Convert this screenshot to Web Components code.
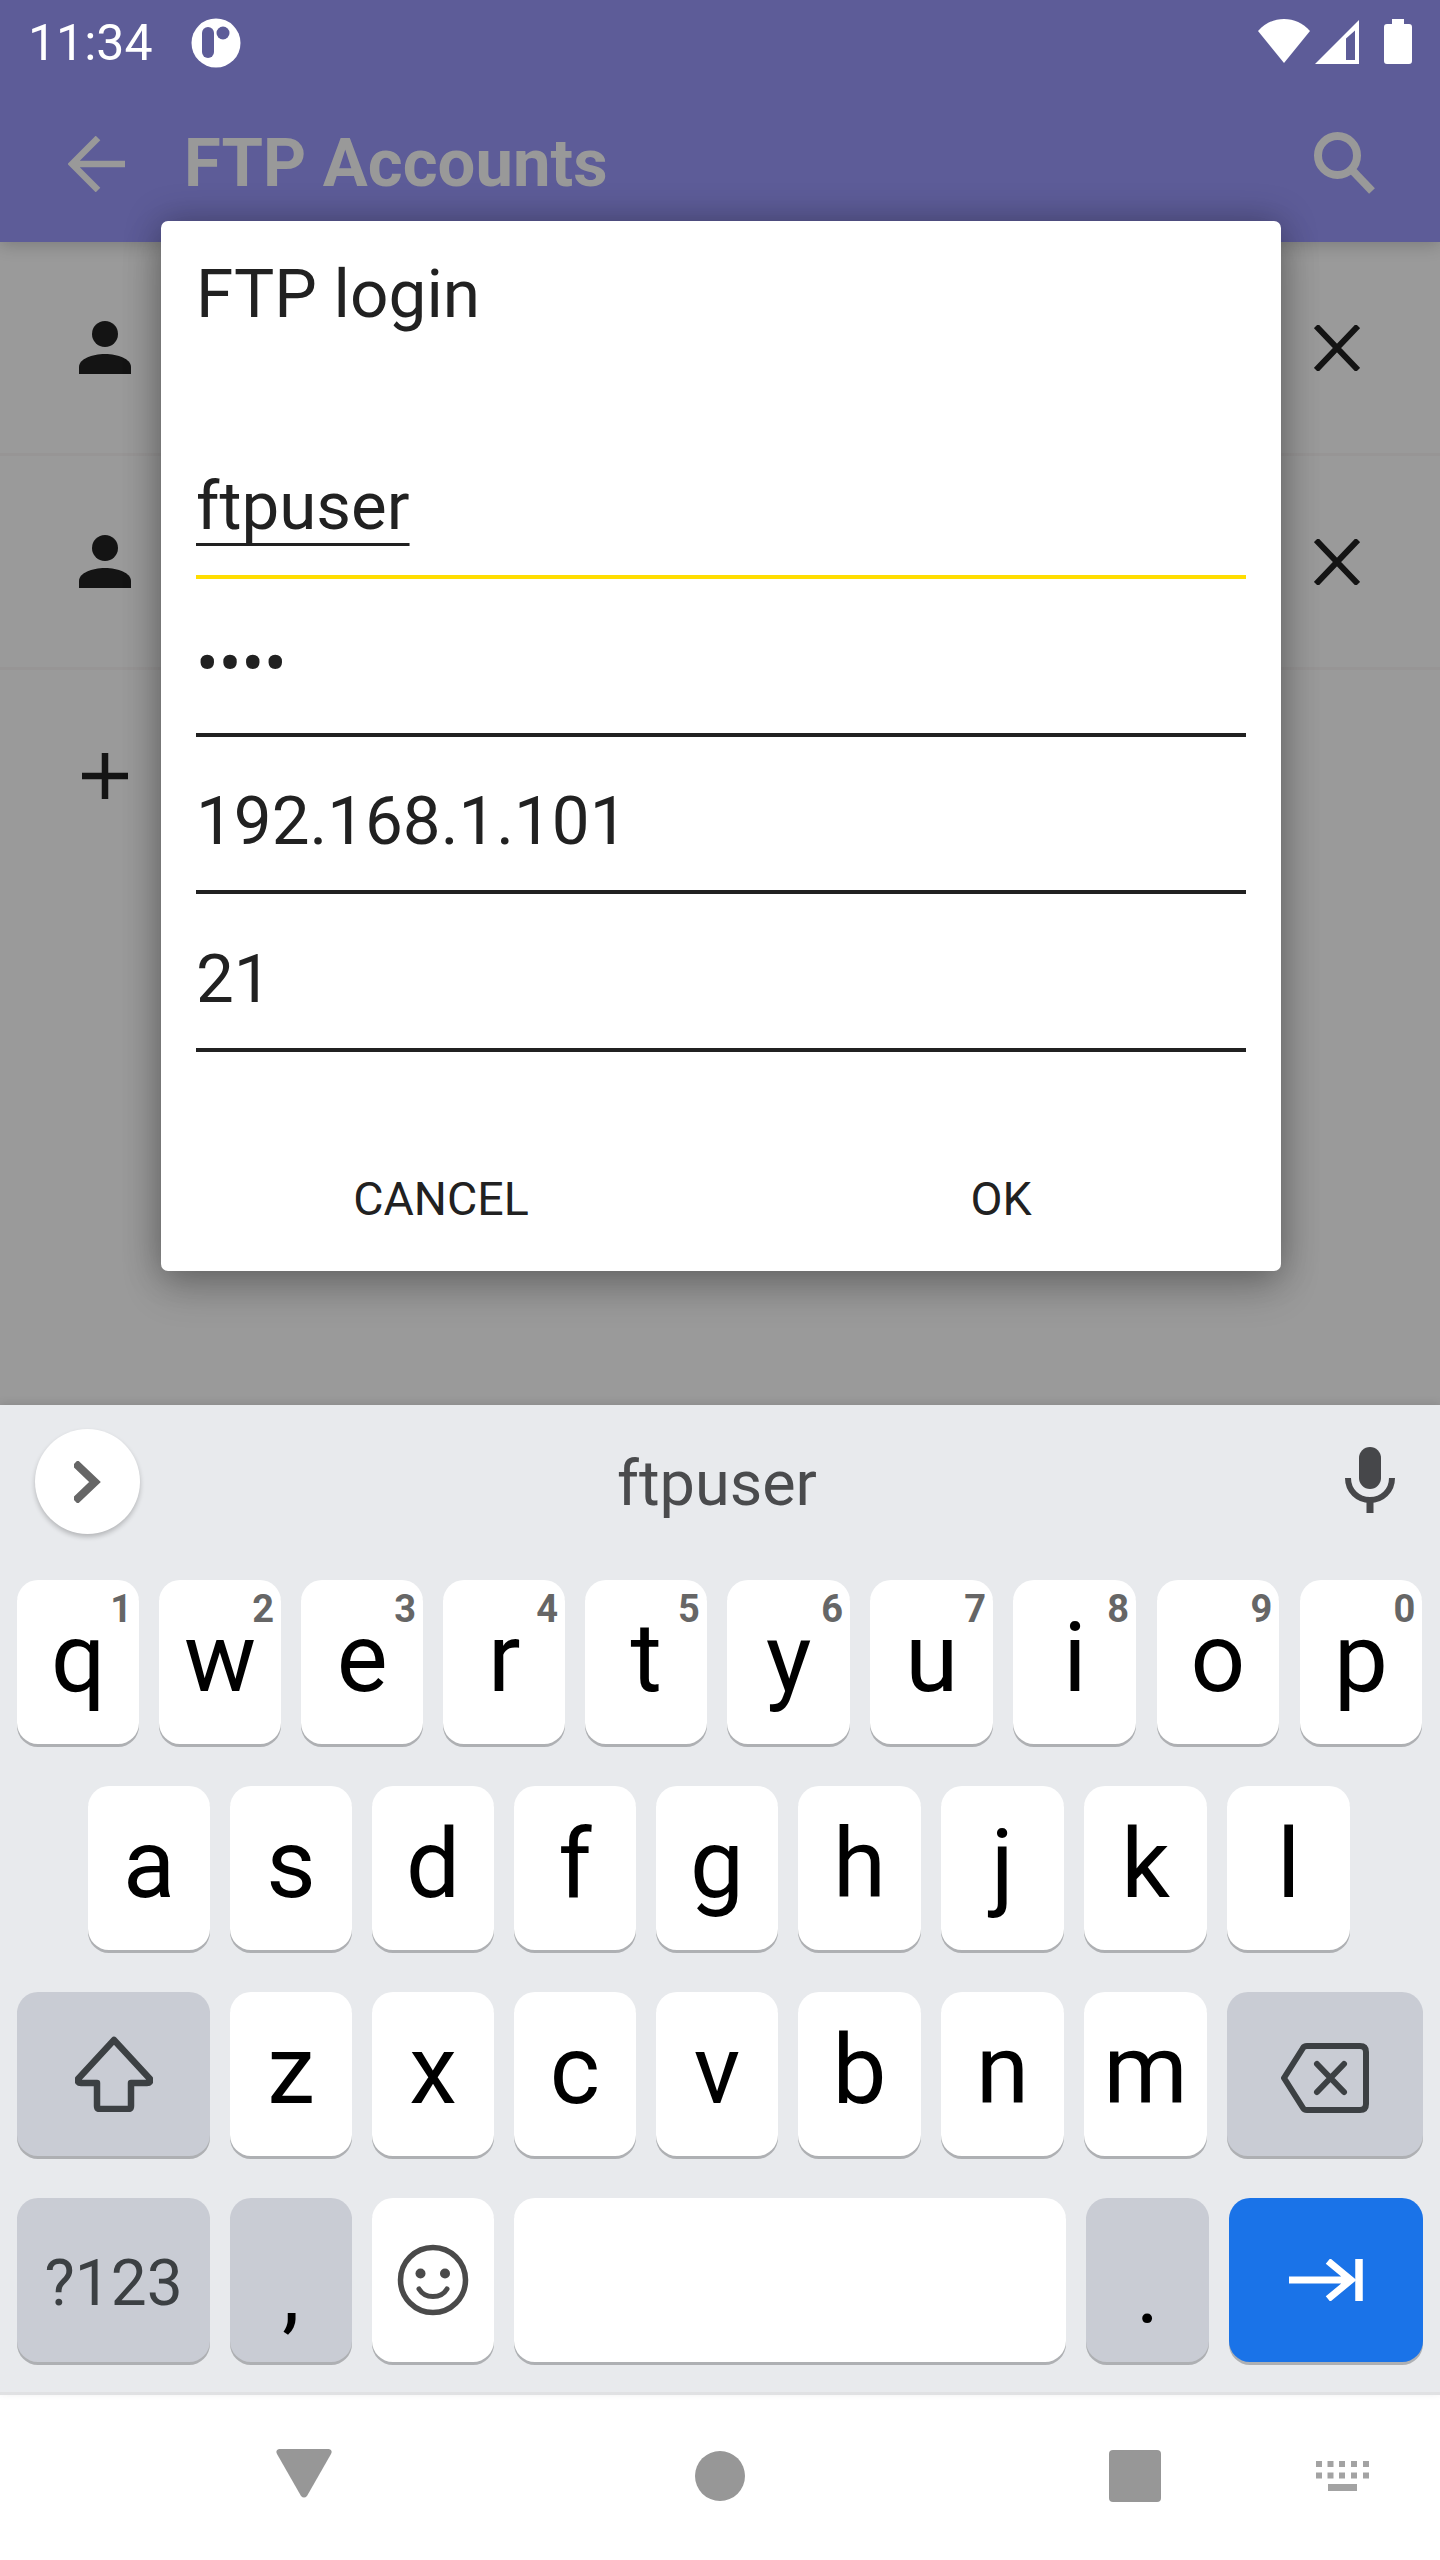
<!DOCTYPE html>
<html>
<head>
<meta charset="utf-8">
<title>FTP Accounts</title>
<style>
    html, body { margin: 0; padding: 0; }
    body { font-family: Roboto, "Liberation Sans", sans-serif; }
</style>
</head>
<body>
<ftp-app>
    <status-bar slot="top" time="11:34"></status-bar>
    <app-bar slot="top" heading="FTP Accounts"></app-bar>
    <account-row icon="person" removable></account-row>
    <account-row icon="person" removable></account-row>
    <account-row icon="add" plain></account-row>
    <login-dialog slot="modal" heading="FTP login">
        <dialog-field focused composing>ftpuser</dialog-field>
        <dialog-field>••••</dialog-field>
        <dialog-field>192.168.1.101</dialog-field>
        <dialog-field>21</dialog-field>
    </login-dialog>
    <soft-keyboard slot="bottom" suggestion="ftpuser"></soft-keyboard>
    <nav-bar slot="bottom"></nav-bar>
</ftp-app>

<script>
    const ICONS = {
        person: `<svg width="52" height="53" viewBox="0 0 52 53"><circle cx="26" cy="13" r="13" fill="currentColor"/><path d="M0 53V46C0 38 13 33 26 33C39 33 52 38 52 46V53Z" fill="currentColor"/></svg>`,
        add: `<svg width="46" height="46" viewBox="0 0 46 46"><path d="M23 0V46M0 23H46" stroke="currentColor" stroke-width="6.5" fill="none"/></svg>`,
        close: `<svg width="46" height="46" viewBox="0 0 46 46"><path d="M2 1L44 45M44 1L2 45" stroke="currentColor" stroke-width="6" fill="none"/></svg>`,
    };

    class FtpApp extends HTMLElement {
        constructor() {
            super();
            this.attachShadow({ mode: 'open' });
            this.shadowRoot.innerHTML = `
            <style>
                :host { display: flex; flex-direction: column; position: relative; height: 2560px; width: 1440px; overflow: hidden; background: #9a9a9a; }
                .list { flex: 1; }
                .modal { position: absolute; top: 221px; left: 161px; }
            </style>
            <slot name="top"></slot>
            <div class="list"><slot></slot></div>
            <div class="modal"><slot name="modal"></slot></div>
            <slot name="bottom"></slot>`;
        }
    }

    class StatusBar extends HTMLElement {
        constructor() {
            super();
            this.attachShadow({ mode: 'open' });
        }
        connectedCallback() {
            this.shadowRoot.innerHTML = `
            <style>
                :host { display: flex; align-items: flex-start; height: 84px; background: #5d5c98; color: #fff; padding-left: 28px; padding-right: 28px; position: relative; z-index: 1; }
                .time { font-size: 50px; line-height: 50px; margin-top: 18px; width: 163px; white-space: nowrap; }
                .logo { margin-top: 18px; }
                .right { margin-left: auto; display: flex; align-items: flex-start; margin-top: 19px; }
            </style>
            <span class="time">${this.getAttribute('time')}</span>
            <svg class="logo" width="50" height="50" viewBox="0 0 50 50">
                <circle cx="25" cy="25" r="24.5" fill="#fff"/>
                <rect x="11" y="9" width="12" height="31" rx="6" fill="#5d5c98"/>
                <circle cx="32" cy="15" r="6.5" fill="#5d5c98"/>
            </svg>
            <div class="right">
                <svg width="54" height="45" viewBox="0 0 54 45"><path d="M1 12C8 4 17 0 27 0C37 0 46 4 53 12L27 44Z" fill="#fff"/></svg>
                <svg style="margin-left:4px" width="44" height="45" viewBox="0 0 44 45"><path fill-rule="evenodd" d="M44 1V45H0ZM31 19.500V41H40V11.500Z" fill="#fff"/></svg>
                <svg style="margin-left:25px" width="28" height="46" viewBox="0 0 28 46"><path d="M8 0H20V5H25Q28 5 28 8V42Q28 45 25 45H3Q0 45 0 42V8Q0 5 3 5H8Z" fill="#fff"/></svg>
            </div>`;
        }
    }

    class AppBar extends HTMLElement {
        constructor() {
            super();
            this.attachShadow({ mode: 'open' });
        }
        connectedCallback() {
            this.shadowRoot.innerHTML = `
            <style>
                :host { display: flex; align-items: flex-start; height: 158px; background: #5d5c98; color: #999; box-shadow: 0 3px 16px rgba(0,0,0,.2); position: relative; }
                .back { margin: 52px 0 0 68px; }
                h1 { margin: 40px 0 0 0; padding-left: 58px; font-size: 67px; line-height: 78px; font-weight: 700; white-space: nowrap; }
                .search { margin: 48px 64px 0 auto; }
            </style>
            <svg class="back" width="58" height="56" viewBox="0 0 58 56"><path d="M57 28H4M30 2L4 28L30 54" stroke="currentColor" stroke-width="6.500" fill="none"/></svg>
            <h1>${this.getAttribute('heading')}</h1>
            <svg class="search" width="62" height="62" viewBox="0 0 62 62"><circle cx="23.500" cy="23.500" r="19.500" stroke="currentColor" stroke-width="8" fill="none"/><path d="M37 37L58 59" stroke="currentColor" stroke-width="8" fill="none"/></svg>`;
        }
    }

    class AccountRow extends HTMLElement {
        constructor() {
            super();
            this.attachShadow({ mode: 'open' });
        }
        connectedCallback() {
            const close = this.hasAttribute('removable') ? `<span class="x">${ICONS.close}</span>` : '';
            this.shadowRoot.innerHTML = `
            <style>
                :host { display: flex; align-items: center; justify-content: space-between; height: 211px; padding: 0 80px 0 79px; border-bottom: 3px solid #979595; color: #141414; }
                :host([plain]) { border-bottom-color: transparent; padding-left: 82px; }
                span { display: flex; }
            </style>
            <span>${ICONS[this.getAttribute('icon')]}</span>
            ${close}`;
        }
    }

    class LoginDialog extends HTMLElement {
        constructor() {
            super();
            this.attachShadow({ mode: 'open' });
        }
        connectedCallback() {
            this.shadowRoot.innerHTML = `
            <style>
                :host { display: block; width: 1120px; height: 1050px; background: #fff; border-radius: 7px; color: #212121; box-shadow: 0 0 36px rgba(0,0,0,.28), 0 18px 40px rgba(0,0,0,.2); }
                h2 { margin: 0; padding: 40px 35px 0; height: 160.500px; font-size: 67.500px; line-height: 66px; font-weight: 400; }
                .fields { padding: 0 35px; }
                .actions { display: flex; margin-top: 91.500px; height: 112px; }
                .actions span { flex: 1; display: flex; align-items: center; justify-content: center; font-size: 46.500px; }
            </style>
            <h2>${this.getAttribute('heading')}</h2>
            <div class="fields"><slot></slot></div>
            <div class="actions"><span>CANCEL</span><span>OK</span></div>`;
        }
    }

    class DialogField extends HTMLElement {
        constructor() {
            super();
            this.attachShadow({ mode: 'open' });
            this.shadowRoot.innerHTML = `
            <style>
                :host { display: flex; align-items: flex-end; box-sizing: border-box; height: 157.500px; padding-bottom: 34px; border-bottom: 4px solid #212121; font-size: 67.300px; line-height: 70px; }
                :host([focused]) { border-bottom-color: #ffdd00; }
                :host([composing]) span { text-decoration: underline; text-decoration-thickness: 3px; text-underline-offset: 14px; text-decoration-skip-ink: none; }
            </style>
            <span><slot></slot></span>`;
        }
    }

    class KbKey extends HTMLElement {
        constructor() {
            super();
            this.attachShadow({ mode: 'open' });
        }
        connectedCallback() {
            const hint = this.getAttribute('hint');
            this.shadowRoot.innerHTML = `
            <style>
                :host { display: flex; align-items: center; justify-content: center; position: relative; box-sizing: border-box; flex: 0 0 121.600px; height: 164px; padding-bottom: 8px; background: #fff; border-radius: 21px; box-shadow: 0 3px 0 #aeb0b3; color: #000; font-size: 96px; line-height: 96px; }
                :host([east]) { flex-basis: 122.700px; }
                :host([wide]) { flex-basis: 192.400px; }
                :host([grow]) { flex: 1; }
                :host([mod]) { background: #c9ccd4; }
                :host([action]) { background: #1a73e8; }
                :host([small]) { font-size: 64px; line-height: 64px; color: #3c4043; padding: 7px 0 0; }
                :host([low]) { font-size: 88px; line-height: 88px; padding: 24px 0 0; }
                :host([icon]) { padding: 0; }
                .hint { position: absolute; top: 10px; right: 7px; font-size: 38px; line-height: 38px; font-weight: 700; color: #666; }
            </style>
            <slot></slot>
            ${hint ? `<span class="hint">${hint}</span>` : ''}`;
        }
    }

    class SoftKeyboard extends HTMLElement {
        constructor() {
            super();
            this.attachShadow({ mode: 'open' });
        }
        connectedCallback() {
            // keys right of the middle are about a pixel wider in the reference
            const keys = (chars, split) => chars.split('').map((c, i) => {
                const hint = chars === 'qwertyuiop' ? ` hint="${(i + 1) % 10}"` : '';
                return `<kb-key${hint}${i >= split ? ' east' : ''}>${c}</kb-key>`;
            }).join('');
            this.shadowRoot.innerHTML = `
            <style>
                :host { display: block; height: 987px; background: #e8eaed; border-bottom: 3px solid #e0e1e3; box-shadow: 0 -2px 8px rgba(0,0,0,.1); position: relative; }
                .strip { display: grid; grid-template-columns: 1fr auto 1fr; align-items: center; height: 175px; box-sizing: border-box; padding: 0 45px 22px 35px; }
                .chev { width: 105px; height: 105px; border-radius: 50%; background: #fff; box-shadow: 0 3px 5px rgba(0,0,0,.22); display: flex; align-items: center; justify-content: center; }
                .word { font-size: 63px; line-height: 63px; color: #4a4b4d; margin: 4px 0 0 4px; }
                .mic { justify-self: end; margin-top: -3px; display: flex; }
                .rows { display: flex; flex-direction: column; gap: 42px; padding: 0 17.500px 0 17.400px; }
                .row { display: flex; gap: 20.400px; }
                .row.mid { padding-left: 70.800px; }
                svg { display: block; }
            </style>
            <div class="strip">
                <div class="chev"><svg width="28" height="42" viewBox="0 0 28 42"><path d="M1 2L21 21L1 40" stroke="#666" stroke-width="8" fill="none"/></svg></div>
                <div class="word">${this.getAttribute('suggestion')}</div>
                <div class="mic"><svg width="50" height="66" viewBox="0 0 50 66"><rect x="14" y="0" width="22" height="42" rx="11" fill="#46474a"/><path d="M3 31C3 44 13 53 25 53C37 53 47 44 47 31" stroke="#46474a" stroke-width="6" fill="none"/><path d="M25 52V66" stroke="#46474a" stroke-width="7"/></svg></div>
            </div>
            <div class="rows">
                <div class="row">${keys('qwertyuiop', 5)}</div>
                <div class="row mid">${keys('asdfghjkl', 5)}</div>
                <div class="row">
                    <kb-key wide mod icon>
                        <svg width="78" height="76" viewBox="0 0 78 76"><path d="M39 4L75 43Q76 47 72 47H56V70Q56 73 53 73H25Q22 73 22 70V47H6Q2 47 3 43Z" stroke="#3c4043" stroke-width="6.500" stroke-linejoin="round" fill="none"/></svg>
                    </kb-key>
                    ${keys('zxcvbnm', 4)}
                    <kb-key grow mod icon style="padding-top:7px">
                        <svg width="88" height="70" viewBox="0 0 88 70"><path d="M3 35L22 5Q23 3 26 3H79Q85 3 85 9V61Q85 67 79 67H26Q23 67 22 65Z" stroke="#3c4043" stroke-width="6" stroke-linejoin="round" fill="none"/><path d="M36 21L63 49M63 21L36 49" stroke="#3c4043" stroke-width="6" stroke-linecap="round"/></svg>
                    </kb-key>
                </div>
                <div class="row">
                    <kb-key wide mod small>?123</kb-key>
                    <kb-key mod low>,</kb-key>
                    <kb-key icon>
                        <svg width="72" height="72" viewBox="0 0 72 72"><circle cx="36" cy="36" r="32.500" stroke="#4a4a4a" stroke-width="5.500" fill="none"/><circle cx="23.500" cy="29.500" r="5" fill="#4a4a4a"/><circle cx="48" cy="29.500" r="5" fill="#4a4a4a"/><path d="M22 45C28 55 44 55 50 45" stroke="#4a4a4a" stroke-width="5" stroke-linecap="round" fill="none"/></svg>
                    </kb-key>
                    <kb-key style="flex-basis:551.700px"></kb-key>
                    <kb-key mod low east>.</kb-key>
                    <kb-key grow action icon>
                        <svg width="74" height="42" viewBox="0 0 74 42"><path d="M0 21H62M39 2L62 21L39 40" stroke="#fff" stroke-width="7" fill="none"/><path d="M70 0V42" stroke="#fff" stroke-width="7.500"/></svg>
                    </kb-key>
                </div>
            </div>`;
        }
    }

    class NavBar extends HTMLElement {
        constructor() {
            super();
            this.attachShadow({ mode: 'open' });
            this.shadowRoot.innerHTML = `
            <style>
                :host { display: flex; align-items: center; box-sizing: border-box; height: 165px; padding: 0 0 3px 276px; background: #fff; }
                .back { margin-top: -5px; }
                .home { width: 50px; height: 50px; border-radius: 50%; background: #979797; margin-left: 363px; }
                .recent { width: 52px; height: 52px; border-radius: 4px; background: #979797; margin-left: 364px; }
                .ime { margin-left: 155px; }
            </style>
            <svg class="back" width="56" height="49" viewBox="0 0 56 49"><path d="M3 0H53Q57 1 55 5L31 47Q28 50 25 47L1 5Q-1 1 3 0Z" fill="#979797"/></svg>
            <div class="home"></div>
            <div class="recent"></div>
            <svg class="ime" width="54" height="30" viewBox="0 0 54 30" fill="#a3a3a3">
                <rect x="0" y="0" width="6" height="6"/><rect x="11.500" y="0" width="6" height="6"/><rect x="23" y="0" width="6" height="6"/><rect x="35" y="0" width="6" height="6"/><rect x="47" y="0" width="6" height="6"/>
                <rect x="0" y="11.500" width="6" height="6"/><rect x="11.500" y="11.500" width="6" height="6"/><rect x="23" y="11.500" width="6" height="6"/><rect x="35" y="11.500" width="6" height="6"/><rect x="47" y="11.500" width="6" height="6"/>
                <rect x="12" y="23" width="29" height="7"/>
            </svg>`;
        }
    }

    customElements.define('ftp-app', FtpApp);
    customElements.define('status-bar', StatusBar);
    customElements.define('app-bar', AppBar);
    customElements.define('account-row', AccountRow);
    customElements.define('login-dialog', LoginDialog);
    customElements.define('dialog-field', DialogField);
    customElements.define('kb-key', KbKey);
    customElements.define('soft-keyboard', SoftKeyboard);
    customElements.define('nav-bar', NavBar);
</script>
</body>
</html>
